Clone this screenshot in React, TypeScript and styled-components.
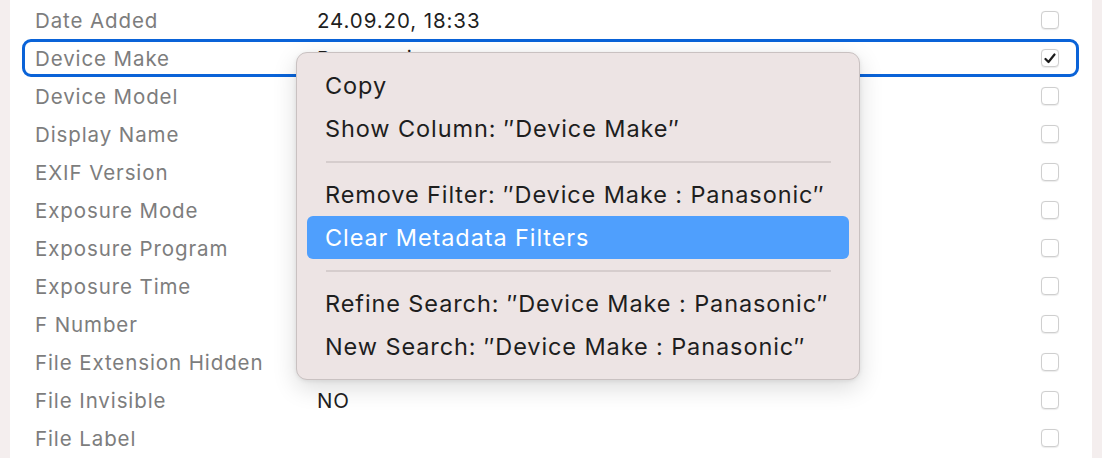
import React from "react";
import styled, { createGlobalStyle } from "styled-components";

const Global = createGlobalStyle`
  html, body { margin: 0; padding: 0; background: #f4eeee; }
  body { font-family: Inter, "Noto Sans", "Liberation Sans", sans-serif; overflow: hidden; }
`;

const Page = styled.div`
  position: relative;
  width: 1102px;
  height: 458px;
  padding: 0 10px;
  box-sizing: border-box;
  overflow: hidden;
`;

const Panel = styled.div`
  background: #ffffff;
  height: 100%;
  padding: 1px 13px 0 12px;
  box-sizing: border-box;
  display: flex;
  flex-direction: column;
`;

const Row = styled.div<{ $selected?: boolean }>`
  display: grid;
  grid-template-columns: 283px 1fr 18px;
  align-items: center;
  height: 38px;
  box-sizing: border-box;
  border: 3px solid ${(p) => (p.$selected ? "#0a63d8" : "transparent")};
  border-radius: 9px;
  padding: 0 17px 0 10px;
`;

const Label = styled.span`
  font-size: 20.5px;
  letter-spacing: 0.9px;
  color: #7d7d7d;
  white-space: nowrap;
`;

const Value = styled.span`
  font-size: 20.5px;
  letter-spacing: 0.9px;
  color: #1f1f1f;
  white-space: nowrap;
  margin-left: -1px;
`;

const Check = styled.span<{ $on?: boolean }>`
  width: 18px;
  height: 18px;
  box-sizing: border-box;
  border: 1px solid #cfcfcf;
  border-radius: 4px;
  background: #fff;
  box-shadow: 0 0.5px 1px rgba(0, 0, 0, 0.08);
  display: flex;
  align-items: center;
  justify-content: center;
`;

const Menu = styled.div`
  position: absolute;
  left: 296px;
  top: 52px;
  width: 564px;
  box-sizing: border-box;
  padding: 11px 10px;
  background: #ede4e4;
  border: 1px solid #c9c1c1;
  border-radius: 11px;
  box-shadow: 0 8px 24px rgba(0, 0, 0, 0.14), 0 1px 4px rgba(0, 0, 0, 0.08);
  display: flex;
  flex-direction: column;
`;

const Item = styled.div<{ $active?: boolean }>`
  height: 43px;
  display: flex;
  align-items: center;
  padding-left: 18px;
  border-radius: 6px;
  font-size: 23.5px;
  letter-spacing: 0.9px;
  color: ${(p) => (p.$active ? "#ffffff" : "#1e1e1e")};
  background: ${(p) => (p.$active ? "#4f9ffd" : "transparent")};
  white-space: nowrap;
`;

const Separator = styled.div`
  height: 23px;
  display: flex;
  align-items: center;
  padding: 0 18px 0 19px;
  &::after {
    content: "";
    flex: 1;
    height: 2px;
    background: #d6cdcd;
  }
`;

const rows: { label: string; value?: string; on?: boolean }[] = [
  { label: "Date Added", value: "24.09.20, 18:33" },
  { label: "Device Make", value: "Panasonic", on: true },
  { label: "Device Model" },
  { label: "Display Name" },
  { label: "EXIF Version" },
  { label: "Exposure Mode" },
  { label: "Exposure Program" },
  { label: "Exposure Time" },
  { label: "F Number" },
  { label: "File Extension Hidden" },
  { label: "File Invisible", value: "NO" },
  { label: "File Label" },
];

const Tick = () => (
  <svg width="12" height="11" viewBox="0 0 12 11">
    <path d="M1.5 6 L4.5 9 L10.5 1.5" fill="none" stroke="#1c1c1c" strokeWidth="2.2" strokeLinecap="round" strokeLinejoin="round" />
  </svg>
);

export default function App() {
  return (
    <>
      <Global />
      <Page>
        <Panel>
          {rows.map((r) => (
            <Row key={r.label} $selected={r.on}>
              <Label>{r.label}</Label>
              <Value>{r.value ?? ""}</Value>
              <Check $on={r.on}>{r.on && <Tick />}</Check>
            </Row>
          ))}
        </Panel>
        <Menu>
          <Item>Copy</Item>
          <Item>Show Column: ″Device Make″</Item>
          <Separator />
          <Item>Remove Filter: ″Device Make : Panasonic″</Item>
          <Item $active>Clear Metadata Filters</Item>
          <Separator />
          <Item>Refine Search: ″Device Make : Panasonic″</Item>
          <Item>New Search: ″Device Make : Panasonic″</Item>
        </Menu>
      </Page>
    </>
  );
}
